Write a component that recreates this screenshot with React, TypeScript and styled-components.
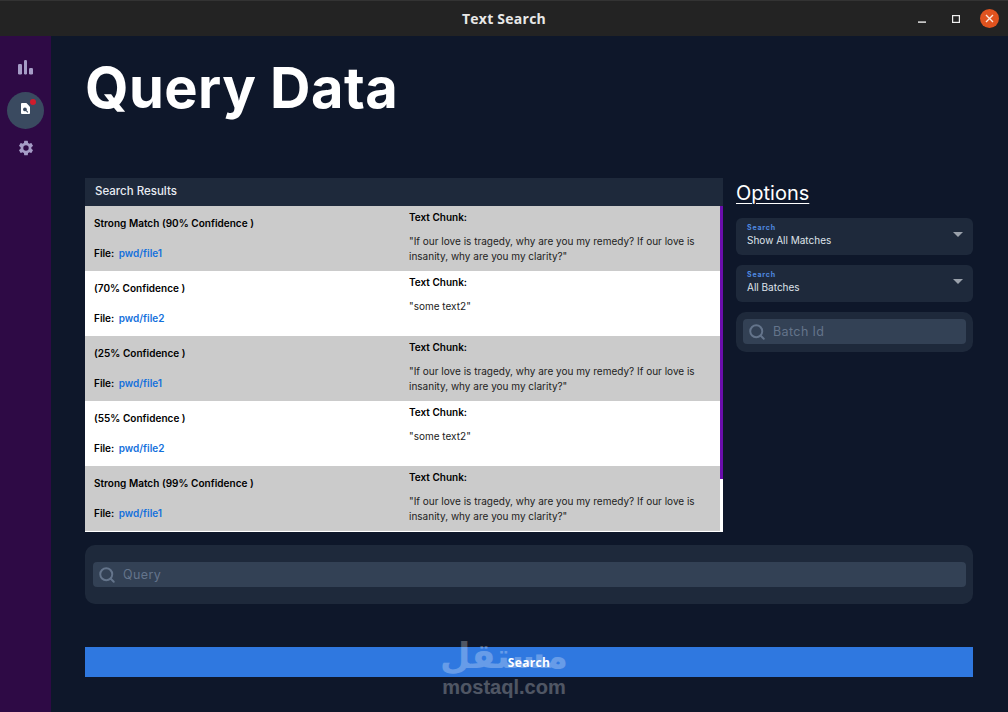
import React from "react";
import styled, { createGlobalStyle } from "styled-components";
import { Search } from "lucide-react";

const Global = createGlobalStyle`
  html, body { margin: 0; padding: 0; background: #0e172a; }
  body { font-family: Inter, "Liberation Sans", sans-serif; }
  * { box-sizing: border-box; }
`;

const Window = styled.div`
  width: 1008px; height: 712px; display: flex; flex-direction: column; overflow: hidden; position: relative;
`;
const TitleBar = styled.header`
  height: 36px; flex: none; background: #232323; border-top: 1px solid #333; position: relative;
  display: flex; align-items: center; justify-content: center;
`;
const TitleText = styled.span`
  font-family: "Open Sans", Roboto, sans-serif; font-weight: 700; font-size: 14px; letter-spacing: 0.25px; color: #e8e8e8;
`;
const WindowControls = styled.div`
  position: absolute; right: 9px; top: 8px; display: flex; align-items: center;
`;
const MinimizeIcon = styled.svg`
  margin-right: 26px;
`;
const MaximizeIcon = styled.svg`
  margin-right: 20px;
`;
const CloseButton = styled.div`
  width: 19px; height: 19px; border-radius: 50%; background: #e0531f; display: flex; align-items: center; justify-content: center;
`;
const Body = styled.div`
  flex: 1; display: flex; min-height: 0;
`;
const Sidebar = styled.nav`
  width: 51px; flex: none; background: #2e0a45; display: flex; flex-direction: column; align-items: center; padding-top: 13px;
`;
const NavItem = styled.div<{ $active?: boolean; $gap?: number }>`
  width: 37px; height: 37px; border-radius: 50%; display: flex; align-items: center; justify-content: center; position: relative;
  margin-bottom: ${p => p.$gap ?? 0}px;
  background: ${p => (p.$active ? "#3a4a60" : "transparent")};
`;
const Dot = styled.span`
  position: absolute; left: 23px; top: 7px; width: 6px; height: 6px; border-radius: 50%; background: #d01c2c;
`;
const FileGlyph = styled.svg`
  margin: 0 1px 5px 0;
`;
const Main = styled.main`
  flex: 1; padding: 0 35px 0 34px; display: flex; flex-direction: column; min-width: 0;
`;
const Heading = styled.h1`
  margin: 19px 0 0 0; height: 123px; font-size: 56px; line-height: 66px; font-weight: 700; color: #fff; letter-spacing: 0.45px;
`;
const TopRow = styled.div`
  display: flex; gap: 13px; height: 354px;
`;
const Results = styled.section`
  width: 638px; flex: none; background: #fff; display: flex; flex-direction: column; position: relative;
`;
const ResultsHead = styled.div`
  height: 28px; flex: none; background: #1e293b; color: #e8ecf2; font-size: 11.5px; font-weight: 500; padding: 0 0 2px 10px;
  display: flex; align-items: center;
`;
const Row = styled.div<{ $grey: boolean }>`
  height: 65px; flex: none; width: 635px; background: ${p => (p.$grey ? "#cbcbcb" : "#fff")}; display: flex; color: #000;
`;
const LeftCell = styled.div`
  width: 324px; flex: none; padding: 0 0 0 9px; display: flex; flex-direction: column;
`;
const Conf = styled.div`
  font-size: 10px; line-height: 14px; font-weight: 600; margin-top: 10px; color: #000; letter-spacing: 0.02px;
`;
const FileLine = styled.div`
  font-size: 10px; line-height: 14px; font-weight: 600; margin-top: 16px; color: #000;
`;
const FileLink = styled.span`
  color: #1470dc; margin-left: 2px;
`;
const RightCell = styled.div`
  flex: 1; display: flex; flex-direction: column; padding-right: 12px;
`;
const ChunkTitle = styled.div`
  font-size: 10px; line-height: 14px; font-weight: 600; margin-top: 4px; color: #000;
`;
const ChunkText = styled.div`
  font-size: 10px; line-height: 15px; margin-top: 10px; color: #222; width: 298px;
`;
const Scrollbar = styled.div`
  position: absolute; right: 0; top: 28px; width: 3px; height: 273px; background: #6a0dad;
`;
const Options = styled.aside`
  flex: 1; display: flex; flex-direction: column; min-width: 0;
`;
const OptionsTitle = styled.h2`
  margin: 3px 0 13px; font-size: 20px; line-height: 24px; font-weight: 400; color: #fff; text-decoration: underline; text-underline-offset: 3px;
  text-decoration-thickness: 1px;
`;
const Select = styled.div`
  height: 37px; background: #1e293b; border-radius: 6px; margin-bottom: 10px; padding: 5px 0 0 11px; position: relative;
`;
const SelectLabel = styled.div`
  font-size: 7px; line-height: 9px; font-weight: 700; letter-spacing: 0.8px; color: #4f8ae0;
`;
const SelectValue = styled.div`
  font-size: 10px; line-height: 15px; color: #dfe3ea; margin-top: 1px;
`;
const Caret = styled.span`
  position: absolute; right: 10px; top: 14px; width: 0; height: 0;
  border-left: 5.5px solid transparent; border-right: 5.5px solid transparent; border-top: 5.5px solid #9aa1ab;
`;
const SearchCard = styled.div<{ $tall?: boolean }>`
  background: #1e293b; border-radius: 10px; padding: ${p => (p.$tall ? "17px 7px 17px 8px" : "7px 7px 8px")};
`;
const SearchField = styled.div`
  height: 25px; background: #334155; border-radius: 4px; display: flex; align-items: center; padding-left: 5px; gap: 7px;
`;
const Placeholder = styled.span`
  font-family: Inter, sans-serif; font-size: 12.5px; letter-spacing: 0.4px; color: #64748b;
`;
const QuerySection = styled.div`
  margin-top: 13px;
`;
const SearchButton = styled.div`
  margin-top: 43px; height: 30px; background: #2f78e0; color: #fff; display: flex; align-items: center; justify-content: center;
  font-family: "Open Sans", sans-serif; font-weight: 700; font-size: 12px; letter-spacing: 0.3px;
`;
const Watermark = styled.div`
  position: absolute; left: 442px; top: 636px; width: 124px; display: flex; flex-direction: column; align-items: center;
  pointer-events: none; color: #fff; opacity: 0.27;
`;
const WatermarkArabic = styled.div`
  font-family: "DejaVu Sans", sans-serif; font-weight: 700; font-size: 35px; line-height: 40px; height: 40px;
`;
const WatermarkLatin = styled.div`
  font-family: "Liberation Sans", sans-serif; font-weight: 700; font-size: 20px; line-height: 22px;
`;

const rows = [
  { grey: true, conf: "Strong Match (90% Confidence )", file: "pwd/file1", text: '"If our love is tragedy, why are you my remedy? If our love is insanity, why are you my clarity?"' },
  { grey: false, conf: "(70% Confidence )", file: "pwd/file2", text: '"some text2"' },
  { grey: true, conf: "(25% Confidence )", file: "pwd/file1", text: '"If our love is tragedy, why are you my remedy? If our love is insanity, why are you my clarity?"' },
  { grey: false, conf: "(55% Confidence )", file: "pwd/file2", text: '"some text2"' },
  { grey: true, conf: "Strong Match (99% Confidence )", file: "pwd/file1", text: '"If our love is tragedy, why are you my remedy? If our love is insanity, why are you my clarity?"' },
];

const BarsIcon = () => (
  <svg width="15" height="15" viewBox="0 0 15 15" fill="#a59cc6">
    <rect x="0" y="4" width="4" height="10.5" rx="1.2" />
    <rect x="6" y="0" width="3" height="14.5" rx="1.2" />
    <rect x="11" y="8" width="4" height="6.5" rx="1.2" />
  </svg>
);
const FileIcon = () => (
  <FileGlyph width="9" height="11" viewBox="0 0 10 12">
    <path d="M1 0h5l4 4v7a1 1 0 0 1-1 1H1a1 1 0 0 1-1-1V1a1 1 0 0 1 1-1z" fill="#fff" />
    <circle cx="4.4" cy="7" r="2.1" fill="#3a4a60" />
    <path d="M5.8 8.4L7.6 10.2" stroke="#3a4a60" strokeWidth="1.2" />
  </FileGlyph>
);
const GearIcon = () => (
  <svg width="18" height="18" viewBox="0 0 24 24" fill="#a59cc6">
    <path d="M19.14 12.94c.04-.3.06-.61.06-.94s-.02-.64-.07-.94l2.03-1.58a.49.49 0 0 0 .12-.61l-1.92-3.32a.49.49 0 0 0-.59-.22l-2.39.96a7 7 0 0 0-1.62-.94l-.36-2.54a.48.48 0 0 0-.48-.41h-3.84a.48.48 0 0 0-.47.41l-.36 2.54c-.59.24-1.13.57-1.62.94l-2.39-.96a.49.49 0 0 0-.59.22L2.73 8.87a.48.48 0 0 0 .12.61l2.03 1.58c-.05.3-.09.63-.09.94s.02.64.07.94l-2.03 1.58a.49.49 0 0 0-.12.61l1.92 3.32c.12.22.37.29.59.22l2.39-.96c.5.38 1.03.7 1.62.94l.36 2.54c.05.24.24.41.48.41h3.84c.24 0 .44-.17.47-.41l.36-2.54c.59-.24 1.13-.56 1.62-.94l2.39.96c.22.08.47 0 .59-.22l1.92-3.32a.48.48 0 0 0-.12-.61l-2.01-1.58zM12 15.6A3.6 3.6 0 1 1 12 8.4a3.6 3.6 0 0 1 0 7.2z" />
  </svg>
);

export default function App() {
  return (
    <Window>
      <Global />
      <TitleBar>
        <TitleText>Text Search</TitleText>
        <WindowControls>
          <MinimizeIcon width="8" height="8" viewBox="0 0 8 8"><rect y="6.4" width="8" height="1.4" fill="#eee" /></MinimizeIcon>
          <MaximizeIcon width="8" height="8" viewBox="0 0 8 8"><rect x=".6" y=".6" width="6.8" height="6.8" fill="none" stroke="#eee" strokeWidth="1.2" /></MaximizeIcon>
          <CloseButton>
            <svg width="9" height="9" viewBox="0 0 9 9"><path d="M1 1l7 7M8 1l-7 7" stroke="#fbe6dc" strokeWidth="1.4" /></svg>
          </CloseButton>
        </WindowControls>
      </TitleBar>
      <Body>
        <Sidebar>
          <NavItem $gap={6}><BarsIcon /></NavItem>
          <NavItem $active><FileIcon /><Dot /></NavItem>
          <NavItem><GearIcon /></NavItem>
        </Sidebar>
        <Main>
          <Heading>Query Data</Heading>
          <TopRow>
            <Results>
              <ResultsHead>Search Results</ResultsHead>
              {rows.map((r, i) => (
                <Row key={i} $grey={r.grey}>
                  <LeftCell>
                    <Conf>{r.conf}</Conf>
                    <FileLine>File: <FileLink>{r.file}</FileLink></FileLine>
                  </LeftCell>
                  <RightCell>
                    <ChunkTitle>Text Chunk:</ChunkTitle>
                    <ChunkText>{r.text}</ChunkText>
                  </RightCell>
                </Row>
              ))}
              <Scrollbar />
            </Results>
            <Options>
              <OptionsTitle>Options</OptionsTitle>
              <Select>
                <SelectLabel>Search</SelectLabel>
                <SelectValue>Show All Matches</SelectValue>
                <Caret />
              </Select>
              <Select>
                <SelectLabel>Search</SelectLabel>
                <SelectValue>All Batches</SelectValue>
                <Caret />
              </Select>
              <SearchCard>
                <SearchField>
                  <Search size={18} color="#64748b" strokeWidth={2.6} />
                  <Placeholder>Batch Id</Placeholder>
                </SearchField>
              </SearchCard>
            </Options>
          </TopRow>
          <QuerySection>
            <SearchCard $tall>
              <SearchField>
                <Search size={18} color="#64748b" strokeWidth={2.6} />
                <Placeholder>Query</Placeholder>
              </SearchField>
            </SearchCard>
          </QuerySection>
          <SearchButton>Search</SearchButton>
        </Main>
      </Body>
      <Watermark>
        <WatermarkArabic>مستقل</WatermarkArabic>
        <WatermarkLatin>mostaql.com</WatermarkLatin>
      </Watermark>
    </Window>
  );
}
